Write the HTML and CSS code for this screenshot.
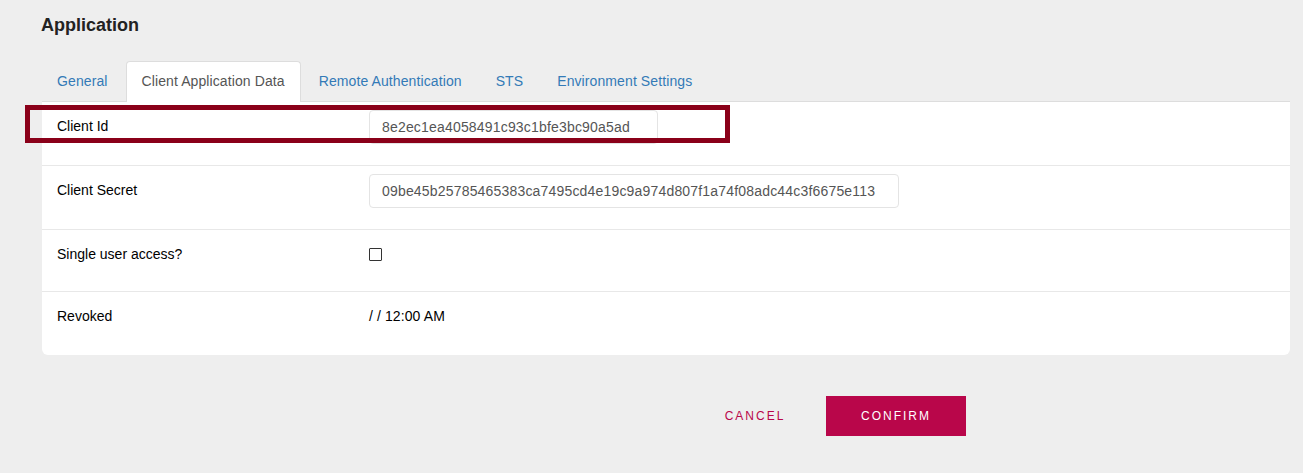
FILE: index.html
```html
<!DOCTYPE html>
<html>
<head>
<meta charset="utf-8">
<link rel="stylesheet" href="styles.css">
</head>
<body>
<div class="page">
  <h1 class="title">Application</h1>
  <ul class="tabs">
    <li class="tab">General</li>
    <li class="tab active">Client Application Data</li>
    <li class="tab">Remote Authentication</li>
    <li class="tab">STS</li>
    <li class="tab">Environment Settings</li>
  </ul>
  <div class="card">
    <div class="highlight"></div>
    <div class="row">
      <div class="label">Client Id</div>
      <div class="value"><div class="input input-id">8e2ec1ea4058491c93c1bfe3bc90a5ad</div></div>
    </div>
    <div class="row">
      <div class="label">Client Secret</div>
      <div class="value"><div class="input input-secret">09be45b25785465383ca7495cd4e19c9a974d807f1a74f08adc44c3f6675e113</div></div>
    </div>
    <div class="row row-check">
      <div class="label">Single user access?</div>
      <div class="value"><span class="checkbox"></span></div>
    </div>
    <div class="row row-last">
      <div class="label">Revoked</div>
      <div class="value"><span class="plain">/ / 12:00 AM</span></div>
    </div>
  </div>
  <div class="actions">
    <button class="btn btn-cancel">CANCEL</button>
    <button class="btn btn-confirm">CONFIRM</button>
  </div>
</div>
</body>
</html>
```

FILE: styles.css
```css
* { box-sizing: border-box; }
html, body {
  margin: 0;
  padding: 0;
  background: #eeeeee;
  font-family: "Liberation Sans", Arial, sans-serif;
  font-size: 14px;
  color: #222;
}
.page {
  padding: 15px 13px 0 41px;
}
.title {
  margin: 0;
  font-size: 18px;
  line-height: 20px;
  font-weight: bold;
  color: #222;
}
.tabs {
  list-style: none;
  margin: 26px 0 0 0;
  padding: 0;
  display: flex;
  position: relative;
  z-index: 1;
}
.tab {
  padding: 9px 15px 10px;
  line-height: 20px;
  letter-spacing: 0.1px;
  border: 1px solid transparent;
  border-bottom: 0;
  border-radius: 4px 4px 0 0;
  margin-right: 2px;
  color: #337ab7;
  cursor: pointer;
}
.tab.active {
  background: #fff;
  border-color: #dddddd;
  color: #555;
  margin-bottom: -1px;
  padding-bottom: 11px;
}
.card {
  position: relative;
  margin-left: 1px;
  background: #fff;
  border-top: 1px solid #dddddd;
  border-radius: 0 0 6px 6px;
}
.highlight {
  position: absolute;
  left: -17px;
  top: 3px;
  width: 705px;
  height: 38px;
  border: 5px solid #8a0019;
  pointer-events: none;
  z-index: 2;
}
.row {
  display: grid;
  grid-template-columns: 312px 1fr;
  padding: 8px 15px 0;
  height: 64px;
  border-bottom: 1px solid #e8e8e8;
}
.row-check { height: 62px; }
.row-last { border-bottom: 0; height: 63px; }
.label {
  padding-top: 6px;
  line-height: 20px;
  color: #000;
}
.value { line-height: 20px; }
.input {
  height: 34px;
  line-height: 32px;
  padding: 0 12px;
  border: 1px solid #e4e4e4;
  border-radius: 4px;
  color: #555;
  background: #fff;
  letter-spacing: 0.18px;
}
.input-id { width: 289px; }
.input-secret { width: 530px; }
.checkbox {
  display: block;
  margin-top: 10px;
  width: 13px;
  height: 13px;
  border: 1px solid #333;
  border-radius: 1px;
}
.plain {
  display: block;
  padding-top: 6px;
  color: #000;
  letter-spacing: 0.1px;
}
.actions {
  display: flex;
  gap: 21px;
  padding: 41px 0 0 664px;
}
.btn {
  font-family: "Liberation Sans", Arial, sans-serif;
  font-size: 12px;
  letter-spacing: 2px;
  height: 40px;
  border: 0;
  padding: 0;
  cursor: pointer;
}
.btn-cancel {
  width: 100px;
  background: transparent;
  color: #b9064a;
}
.btn-confirm {
  width: 140px;
  background: #b9064a;
  color: #fff;
}
```
